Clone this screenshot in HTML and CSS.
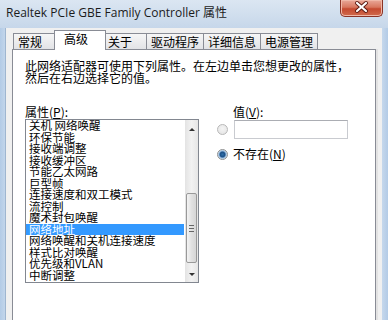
FILE: index.html
```html
<html>
<head>
    <title>Realtek PCIe GBE Family Controller 属性</title>
    <link rel="stylesheet" href="styles.css">
</head>

<body>
<div class="window">
    <div class="titlebar">
        <span class="title">Realtek PCIe GBE Family Controller 属性</span>
        <div class="close">
            <svg width="43" height="17" viewBox="0 0 43 17">
                <path d="M17 4 L26 12 M26 4 L17 12" stroke="#5a1a12" stroke-width="4" stroke-linecap="round"/>
                <path d="M17 4 L26 12 M26 4 L17 12" stroke="#ffffff" stroke-width="2.2" stroke-linecap="round"/>
            </svg>
        </div>
    </div>

    <div class="client">
        <div class="tabs">
            <div class="tab">常规</div>
            <div class="tab active">高级</div>
            <div class="tab">关于</div>
            <div class="tab">驱动程序</div>
            <div class="tab">详细信息</div>
            <div class="tab">电源管理</div>
        </div>

        <div class="panel">
            <p class="intro">此网络适配器可使用下列属性。在左边单击您想更改的属性，<br>然后在右边选择它的值。</p>

            <div class="columns">
                <div class="prop-col">
                    <div class="label">属性(<u>P</u>):</div>
                    <div class="listbox">
                        <ul class="items">
                            <li>关机 网络唤醒</li>
                            <li>环保节能</li>
                            <li>接收端调整</li>
                            <li>接收缓冲区</li>
                            <li>节能乙太网路</li>
                            <li>巨型帧</li>
                            <li>连接速度和双工模式</li>
                            <li>流控制</li>
                            <li>魔术封包唤醒</li>
                            <li class="selected">网络地址</li>
                            <li>网络唤醒和关机连接速度</li>
                            <li>样式比对唤醒</li>
                            <li>优先级和VLAN</li>
                            <li>中断调整</li>
                        </ul>
                        <div class="scrollbar">
                            <div class="arrow up"></div>
                            <div class="track">
                                <div class="thumb"><span class="grip"></span></div>
                            </div>
                            <div class="arrow down"></div>
                        </div>
                    </div>
                </div>

                <div class="value-col">
                    <div class="label value-label">值(<u>V</u>):</div>
                    <div class="row first">
                        <span class="radio disabled"></span>
                        <div class="textbox"></div>
                    </div>
                    <div class="row">
                        <span class="radio checked"></span>
                        <span>不存在(<u>N</u>)</span>
                    </div>
                </div>
            </div>
        </div>
    </div>
</div>
</body>

</html>
```

FILE: styles.css
```css
body {
    margin: 0;
    background-color: #f0f0f0;
    font-family: "Noto Sans CJK SC", "Noto Sans", sans-serif;
    font-size: 12px;
    color: black;
}

.window {
    width: 388px;
    height: 320px;
    overflow: hidden;
    background: linear-gradient(90deg, #b3cbe6 0px, #c6d8ec 6px, #c6d8ec 382px, #b3cbe6 388px);
    display: flex;
    flex-direction: column;
}

.titlebar {
    height: 28px;
    flex-shrink: 0;
    display: flex;
    justify-content: space-between;
    align-items: flex-start;
    padding: 0 5px 0 6px;
    background: linear-gradient(180deg, #dbe6f2 0%, #cfdded 60%, #c6d7ea 100%);
}

.title {
    font-family: "Open Sans", "Noto Sans CJK SC", sans-serif;
    font-size: 12px;
    line-height: 26px;
    color: #1b1b1b;
}

.close {
    width: 43px;
    height: 17px;
    box-sizing: border-box;
    border: 1px solid #8a3326;
    border-top: none;
    border-radius: 0 0 5px 5px;
    background: linear-gradient(180deg, #e9a899 0%, #d8775f 45%, #c54a30 55%, #d06a4c 100%);
    box-shadow: inset 0 0 0 1px #f0b8a8;
}

.close svg {
    display: block;
    margin: -1px 0 0 -1px;
}

.client {
    flex: 1;
    margin: 0 6px 0 5px;
    padding: 0 6px 0 6px;
    background-color: #f0f0f0;
    border-left: 1px solid #9fb6d0;
}

.tabs {
    display: flex;
    align-items: flex-end;
    height: 21px;
    padding-left: 1px;
}

.tab {
    height: 16px;
    min-width: 44px;
    box-sizing: border-box;
    padding: 0 4px 0 4px;
    margin-right: -1px;
    border: 1px solid #898c95;
    border-bottom: none;
    line-height: 15px;
    background: linear-gradient(180deg, #f6f6f6, #e2e3e6);
    white-space: nowrap;
    flex-shrink: 0;
}

.tab.active {
    height: 20px;
    min-width: 52px;
    margin: 0 -3px -1px -2px;
    padding-left: 9px;
    line-height: 16px;
    background: white;
    z-index: 1;
}

.panel {
    height: 260px;
    background-color: white;
    border: 1px solid #898c95;
    padding: 10px 12px 0 12px;
    box-shadow: 2px 0 0 #e2e2e2;
}

.intro {
    margin: 0;
    line-height: 12px;
    white-space: nowrap;
}

.columns {
    display: flex;
    gap: 18px;
    margin-top: 22px;
}

.label {
    line-height: 12px;
    height: 12px;
    margin-bottom: 1px;
}

.listbox {
    width: 174px;
    height: 164px;
    box-sizing: border-box;
    border: 1px solid #828790;
    display: flex;
}

.items {
    flex: 1;
    list-style: none;
    margin: 0;
    padding: 0;
    overflow: hidden;
}

.items li {
    height: 11.5px;
    line-height: 11.5px;
    font-size: 11.5px;
    padding-left: 3px;
    white-space: nowrap;
}

.items li.selected {
    background-color: #3399ff;
    color: white;
    margin-right: 1px;
}

.scrollbar {
    width: 13px;
    display: flex;
    flex-direction: column;
    background: linear-gradient(90deg, #e3e3e3, #f2f2f2 50%, #e6e6e6);
}

.arrow {
    height: 16px;
    position: relative;
}

.arrow::after {
    content: "";
    position: absolute;
    left: 4px;
    width: 0;
    height: 0;
    border-left: 3px solid transparent;
    border-right: 3px solid transparent;
}

.arrow.up::after {
    top: 8px;
    border-bottom: 3px solid #333;
}

.arrow.down::after {
    top: 7px;
    border-top: 3px solid #333;
}

.track {
    flex: 1;
    padding-top: 57px;
}

.thumb {
    height: 70px;
    box-sizing: border-box;
    margin: 0 1px;
    border: 1px solid #999;
    border-radius: 2px;
    background: linear-gradient(90deg, #f4f4f4, #e1e1e1 50%, #d6d6d6);
    display: flex;
    align-items: center;
    justify-content: center;
}

.grip {
    width: 5px;
    height: 5px;
    border-top: 1px solid #666;
    border-bottom: 1px solid #666;
    position: relative;
}

.grip::after {
    content: "";
    position: absolute;
    left: 0;
    right: 0;
    top: 2px;
    border-top: 1px solid #666;
}

.value-label {
    padding-left: 16px;
}

.row {
    display: flex;
    align-items: center;
    gap: 5px;
    line-height: 12px;
    margin-top: 9px;
}

.row.first {
    margin-top: 2px;
    gap: 6px;
}

.radio {
    width: 11px;
    height: 11px;
    box-sizing: border-box;
    border-radius: 50%;
    border: 1px solid #8e8f8f;
    background: radial-gradient(circle at 50% 40%, #ffffff, #dcdcdc);
    flex-shrink: 0;
}

.radio.disabled {
    border-color: #b8b8b8;
    background: radial-gradient(circle at 50% 40%, #f4f4f4, #e2e2e2);
}

.radio.checked {
    background: radial-gradient(circle, #2f6fa8 0px, #1d4f86 2.5px, #8fb6dc 3.5px, #eef3f8 5px);
}

.textbox {
    width: 114px;
    height: 19px;
    box-sizing: border-box;
    border: 1px solid #c9cbd0;
    border-top-color: #abadb3;
    background-color: white;
}
```
